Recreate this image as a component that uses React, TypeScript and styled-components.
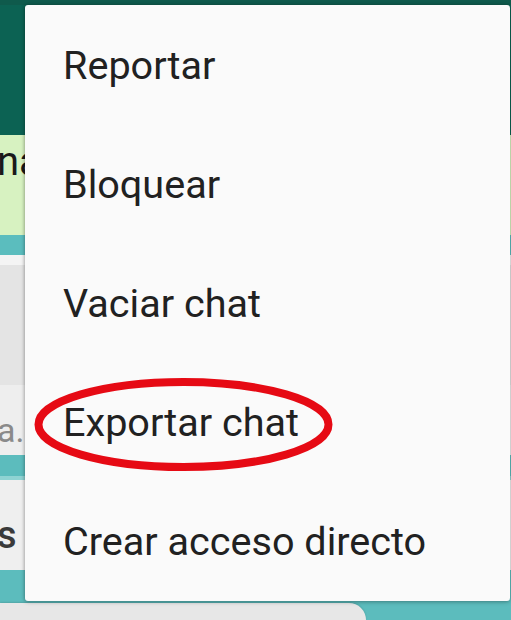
import * as React from 'react';
import styled, { createGlobalStyle } from 'styled-components';

const GlobalStyle = createGlobalStyle`
  html, body {
    margin: 0;
    padding: 0;
    background: #ffffff;
    overflow: hidden;
  }
  body {
    font-family: Roboto, "Noto Sans", "Liberation Sans", sans-serif;
  }
`;

const Screen = styled.div`
  position: relative;
  width: 511px;
  height: 620px;
  overflow: hidden;
`;

const Chat = styled.div`
  display: flex;
  flex-direction: column;
  width: 100%;
  height: 100%;
`;

const Band = styled.div<{ $h: number; $bg: string }>`
  flex: 0 0 ${(p) => p.$h}px;
  background: ${(p) => p.$bg};
  display: flex;
  align-items: center;
  overflow: hidden;
  white-space: nowrap;
`;

const Peek = styled.span<{ $color: string; $size: number; $weight?: number }>`
  color: ${(p) => p.$color};
  font-size: ${(p) => p.$size}px;
  font-weight: ${(p) => p.$weight || 400};
  margin-left: -3px;
`;

const Footer = styled.div`
  flex: 1;
  display: flex;
  background: #5cbcbd;
`;

const InputPill = styled.div`
  width: 366px;
  margin-top: 33px;
  background: #e7e7e7;
  border-top-right-radius: 18px;
  box-shadow: 0 -1px 2px rgba(0, 0, 0, 0.12);
`;

const Menu = styled.div`
  position: absolute;
  left: 25px;
  top: 5px;
  width: 485px;
  padding-top: 1px;
  background: #fafafa;
  border-radius: 3px;
  box-shadow: 0 1px 4px rgba(0, 0, 0, 0.28), -1px 0 3px rgba(0, 0, 0, 0.12);
  display: flex;
  flex-direction: column;
`;

const Item = styled.div`
  height: 119px;
  display: flex;
  align-items: center;
  padding-left: 38px;
  font-size: 39.6px;
  color: #212121;
`;

const Mark = styled.svg`
  position: absolute;
  left: 0;
  top: 0;
  pointer-events: none;
`;

const items = ['Reportar', 'Bloquear', 'Vaciar chat', 'Exportar chat', 'Crear acceso directo'];

export default function App() {
  return (
    <Screen>
      <GlobalStyle />
      <Chat>
        <Band $h={135} $bg="linear-gradient(#0f5a4c 0 5px, #0c6253 5px)" />
        <Band $h={100} $bg="#d7f2c1">
          <Peek $color="#1a1a1a" $size={40} style={{ marginTop: -48 }}>na</Peek>
        </Band>
        <Band $h={20} $bg="#5bbdbe" />
        <Band $h={10} $bg="#f4f4f4" />
        <Band $h={120} $bg="#e4e4e4" />
        <Band $h={70} $bg="#eeeeee">
          <Peek $color="#8a8a8a" $size={34} style={{ marginTop: 20 }}>a. r</Peek>
        </Band>
        <Band $h={21} $bg="#5cbcbd" />
        <Band $h={4} $bg="#8fd3d3" />
        <Band $h={90} $bg="#efefef">
          <Peek $color="#3a3a3a" $size={38} $weight={500} style={{ marginTop: 20 }}>s r</Peek>
        </Band>
        <Footer>
          <InputPill />
        </Footer>
      </Chat>
      <Menu>
        {items.map((label) => (
          <Item key={label}>{label}</Item>
        ))}
      </Menu>
      <Mark width={511} height={620} viewBox="0 0 511 620">
        <ellipse cx={183.5} cy={424.5} rx={145} ry={42.5} fill="none" stroke="#e60a14" strokeWidth={8} />
      </Mark>
    </Screen>
  );
}
